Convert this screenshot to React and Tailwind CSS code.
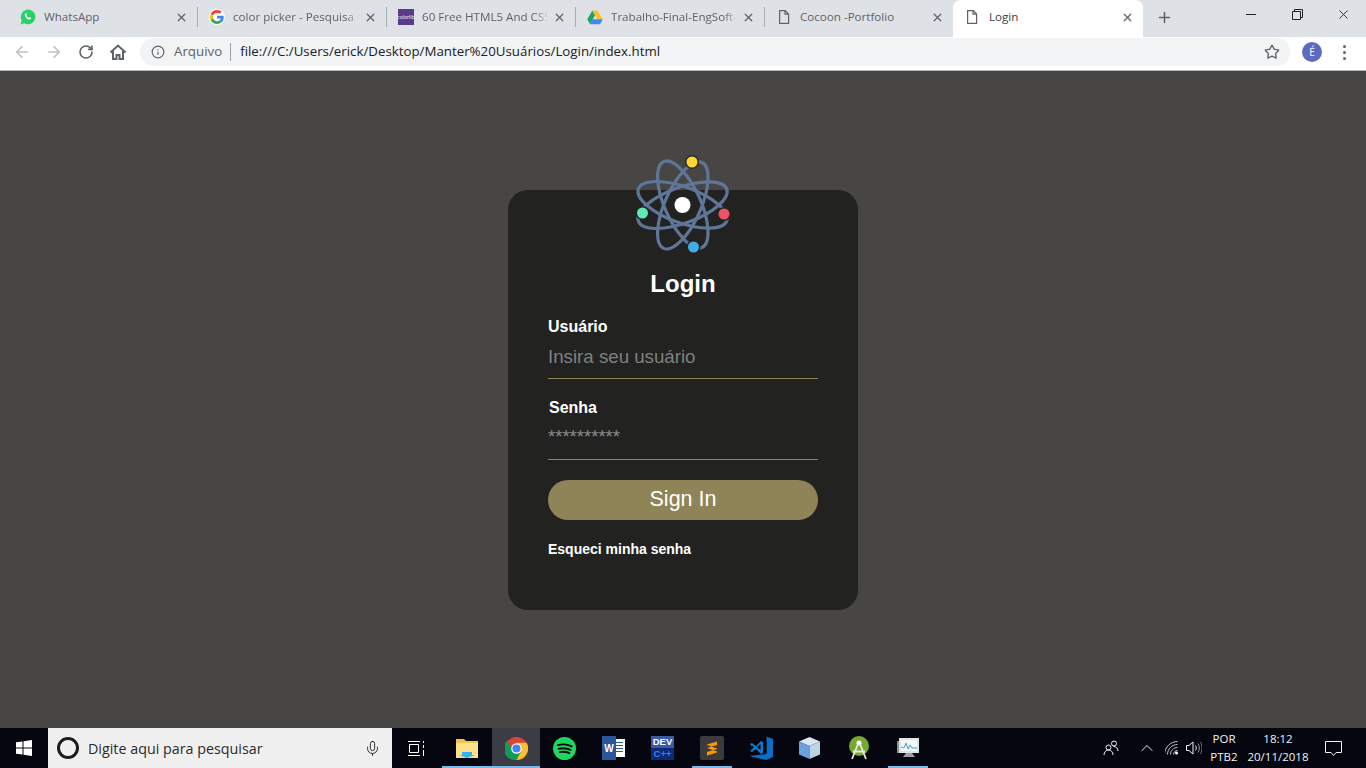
import React from 'react';
import { ArrowLeft, ArrowRight, RotateCw, Info, Star, X, Plus, Mic, ChevronUp } from 'lucide-react';

const FileIcon = () => (
  <svg width="14" height="16" viewBox="0 0 14 16" fill="none" stroke="#5f6368" strokeWidth="1.2">
    <path d="M2.6 1.6h5.6l3.4 3.4v9.4h-9zM8 1.6v3.6h3.6" />
  </svg>
);

const WhatsappIcon = () => (
  <svg width="16" height="16" viewBox="0 0 16 16">
    <path d="M0.6 15.4l1.1-4A7.3 7.3 0 1 1 4.6 14.3z" fill="#25d366" />
    <path d="M5.5 4.4c.4-.4.9-.3 1.1.2l.4 1c.1.3-.3.7-.5 1 .5 1 1.2 1.7 2.3 2.3.3-.2.7-.8 1-.6l1.1.6c.4.2.3.8-.1 1.2-.7.7-1.900.6-3.200-.2-1.400-.9-2.400-2.100-2.800-3.400-.2-.8.200-1.600.7-2.100z" fill="#fff" />
  </svg>
);

const GoogleIcon = () => (
  <span className="flex h-4 w-4 items-center justify-center rounded-full bg-white">
    <svg width="14" height="14" viewBox="0 0 48 48">
      <path fill="#ea4335" d="M24 9.500c3.500 0 6.700 1.200 9.200 3.600l6.900-6.900C35.900 2.400 30.500 0 24 0 14.600 0 6.500 5.400 2.600 13.200l8 6.200C12.400 13.700 17.700 9.500 24 9.500z" />
      <path fill="#4285f4" d="M47 24.500c0-1.600-.1-3.100-.4-4.500H24v9h12.900c-.6 3-2.200 5.500-4.700 7.200l7.700 6C44.400 38 47 31.800 47 24.500z" />
      <path fill="#fbbc05" d="M10.500 28.600A14.500 14.500 0 0 1 10.500 19.400l-8-6.200a24 24 0 0 0 0 21.600z" />
      <path fill="#34a853" d="M24 48c6.500 0 11.900-2.100 15.900-5.800l-7.700-6c-2.200 1.500-4.900 2.300-8.200 2.300-6.300 0-11.600-4.200-13.500-9.900l-8 6.200C6.500 42.600 14.600 48 24 48z" />
    </svg>
  </span>
);

const ColorlibIcon = () => (
  <span className="flex h-4 w-4 items-center justify-center overflow-hidden bg-[#5b3a8c] text-[5px] leading-none text-white">colorlib</span>
);

const DriveIcon = () => (
  <svg width="16" height="15" viewBox="0 0 16 15">
    <path d="M5.300 0.500h5.400l5 8.800h-5.400z" fill="#fbc02d" />
    <path d="M5.300 0.500L0.300 9.300l2.700 4.900 5-8.800z" fill="#1fa463" />
    <path d="M3 14.200h10l2.700-4.900H5.700z" fill="#4285f4" />
  </svg>
);

const HomeIcon = () => (
  <svg width="18" height="18" viewBox="0 0 18 18" fill="none" stroke="#5f6368" strokeWidth="2" className="ml-[15px]">
    <path d="M1.500 9.500L9 2.500l7.500 7M4 8v8h3.500v-4h3v4H14V8" />
  </svg>
);

const tabs = [
  { title: 'WhatsApp', icon: <WhatsappIcon /> },
  { title: 'color picker - Pesquisa G', icon: <GoogleIcon />, fade: true },
  { title: '60 Free HTML5 And CSS', icon: <ColorlibIcon />, fade: true },
  { title: 'Trabalho-Final-EngSoft-', icon: <DriveIcon />, fade: true },
  { title: 'Cocoon -Portfolio', icon: <FileIcon /> },
];

const Tab = ({ title, icon, fade, last }) => (
  <div className="relative flex h-[37px] w-[189px] shrink-0 items-center pb-[3px] pl-[12px] pr-[7px]">
    <span className="flex w-4 shrink-0 justify-center">{icon}</span>
    <span className={`ml-2 w-[126px] overflow-hidden whitespace-nowrap text-[11.600px] text-[#5f6368] ${fade ? '[mask-image:linear-gradient(to_right,black_90%,transparent)]' : ''}`}>
      {title}
    </span>
    <X size={13} strokeWidth={2.400} className="ml-auto mr-[2px] text-[#5f6368]" />
    {!last && <span className="absolute right-[-1px] top-[7px] h-[20px] w-px bg-[#a9acb0]" />}
  </div>
);

const TabStrip = () => (
  <div className="flex h-[37px] items-stretch bg-[#dee1e6] pl-[8px]">
    {tabs.map((t, i) => (
      <Tab key={t.title} {...t} last={i === tabs.length - 1} />
    ))}
    <div className="flex h-[37px] w-[190px] shrink-0 items-center rounded-t-[8px] bg-white pb-[3px] pl-[12px] pr-[9px]">
      <FileIcon />
      <span className="ml-[10px] text-[11.600px] text-[#3c4043]">Login</span>
      <X size={13} strokeWidth={2.400} className="ml-auto text-[#5f6368]" />
    </div>
    <div className="ml-[13px] flex items-center pb-[3px]">
      <Plus size={17} strokeWidth={2.200} className="text-[#5f6368]" />
    </div>
    <div className="ml-auto flex h-[29px] items-center text-[#202124]">
      <span className="flex w-[46px] justify-center"><span className="h-px w-[10px] bg-[#202124]" /></span>
      <span className="flex w-[46px] justify-center">
        <svg width="11" height="11" viewBox="0 0 11 11" fill="none" stroke="#202124">
          <path d="M0.500 2.500h8v8h-8zM2.500 2.500v-2h8v8h-2" />
        </svg>
      </span>
      <span className="flex w-[46px] justify-center"><X size={15} strokeWidth={1.400} /></span>
    </div>
  </div>
);

const Toolbar = () => (
  <div className="flex h-[34px] items-start border-b border-[#b8b8b8] bg-white pl-[13px] pr-[12px]">
    <div className="flex h-[30px] items-center">
      <ArrowLeft size={18} strokeWidth={2.200} className="text-[#bdc1c6]" />
      <ArrowRight size={18} strokeWidth={2.200} className="ml-[14px] text-[#bdc1c6]" />
      <RotateCw size={16} strokeWidth={2.400} className="ml-[15px] text-[#5f6368]" />
      <HomeIcon />
    </div>
    <div className="ml-[13px] mt-px flex h-[28px] w-[1150px] items-center rounded-full bg-[#f1f3f4] pl-[11px] pr-[10px]">
      <Info size={14} strokeWidth={2} className="text-[#5f6368]" />
      <span className="ml-[9px] text-[13.300px] text-[#5f6368]">Arquivo</span>
      <span className="ml-2 h-[18px] w-px bg-[#9aa0a6]" />
      <span className="ml-[9px] text-[13.300px] text-[#202124]">file:///C:/Users/erick/Desktop/Manter%20Usuários/Login/index.html</span>
      <Star size={16} strokeWidth={2} className="ml-auto text-[#5f6368]" />
    </div>
    <div className="flex h-[30px] items-center">
      <span className="ml-[12px] flex h-5 w-5 items-center justify-center rounded-full bg-[#5c6bc0] text-[10px] text-white">É</span>
      <span className="ml-[21px] flex flex-col gap-[3px]">
        <span className="h-[3px] w-[3px] rounded-full bg-[#5f6368]" />
        <span className="h-[3px] w-[3px] rounded-full bg-[#5f6368]" />
        <span className="h-[3px] w-[3px] rounded-full bg-[#5f6368]" />
      </span>
    </div>
  </div>
);

const AtomLogo = () => (
  <svg width="100" height="100" viewBox="-50 -50 100 100" fill="none" className="mx-auto">
    {[20, -20, 66, -66].map((a) => (
      <ellipse key={a} cx="-0.500" cy="0" rx="47" ry="18" stroke="#5f7698" strokeWidth="3.200" transform={`rotate(${a})`} />
    ))}
    <circle cx="-0.500" r="12" fill="#222221" />
    <circle cx="-0.500" r="8" fill="#fff" />
    <circle cx="9" cy="-43" r="7" fill="#2c2c2c" />
    <circle cx="9" cy="-43" r="5.500" fill="#fdd835" />
    <circle cx="41" cy="9" r="7" fill="#222221" />
    <circle cx="41" cy="9" r="5.500" fill="#ef5368" />
    <circle cx="10.500" cy="42" r="7" fill="#222221" />
    <circle cx="10.500" cy="42" r="5.500" fill="#41ade6" />
    <circle cx="-40.500" cy="8" r="7" fill="#222221" />
    <circle cx="-40.500" cy="8" r="5.500" fill="#62e8b4" />
  </svg>
);

const LoginCard = () => (
  <div className="flex h-[420px] w-[350px] flex-col rounded-[20px] bg-[#222221] px-[40px] font-['Liberation_Sans',sans-serif] text-white">
    <div className="-mt-[35px]"><AtomLogo /></div>
    <h1 className="mt-[15px] text-center text-[24px] font-bold leading-[28px]">Login</h1>
    <label className="mt-[20px] text-[16px] font-bold leading-[18px]">Usuário</label>
    <div className="flex h-[43px] items-center border-b border-[#8f8358] text-[18.700px] text-[#808080]">Insira seu usuário</div>
    <label className="ml-px mt-[20px] text-[16px] font-bold leading-[18px]">Senha</label>
    <div className="h-[43px] border-b border-[#8f8358] pt-[9px] text-[18.500px] leading-[22px] text-[#8a8a8a]">**********</div>
    <button className="mt-[20px] h-[40px] rounded-full bg-[#8f8358] pb-[2px] text-[21.500px] text-white">Sign In</button>
    <a className="mt-[21px] text-[14px] font-bold leading-[16px]">Esqueci minha senha</a>
  </div>
);

// Taskbar app icons, drawn small
const FolderApp = () => (
  <svg width="22" height="20" viewBox="0 0 22 20">
    <path d="M0 1h8l2 2h12v3H0z" fill="#f0c64a" />
    <path d="M0 5h22v15H0z" fill="#fde08a" />
    <path d="M6 14h10v3h3l-8 3-8-3h3z" fill="#36b3ea" />
  </svg>
);

const ChromeApp = () => (
  <svg width="23" height="23" viewBox="0 0 48 48">
    <circle cx="24" cy="24" r="24" fill="#db4437" />
    <path d="M24 48L36 27H24l-8 0-12-19a24 24 0 0 0 20 40z" fill="#0f9d58" />
    <path d="M24 48a24 24 0 0 0 21-36H24l10 17z" fill="#fbc02d" />
    <circle cx="24" cy="24" r="11" fill="#fff" />
    <circle cx="24" cy="24" r="8.500" fill="#4285f4" />
  </svg>
);

const SpotifyApp = () => (
  <svg width="23" height="23" viewBox="0 0 24 24">
    <circle cx="12" cy="12" r="12" fill="#1ed760" />
    <path d="M5 8.500c5-1.300 10-1 14.500 1.300M6 12.300c4.500-1.100 8.500-.7 12.300 1.200M7 15.800c3.500-.8 7-.5 10 1" stroke="#0a0a12" strokeWidth="2" fill="none" strokeLinecap="round" />
  </svg>
);

const WordApp = () => (
  <span className="relative flex h-[24px] w-[23px] items-center">
    <span className="absolute right-0 top-[3px] h-[18px] w-[12px] bg-white" />
    <span className="absolute right-[2px] top-[6px] h-[12px] w-[7px] bg-[repeating-linear-gradient(#2b579a_0_1px,transparent_1px_3px)]" />
    <span className="relative flex h-[24px] w-[14px] items-center justify-center bg-[#2b579a] font-['Liberation_Sans',sans-serif] text-[10px] font-bold text-white">W</span>
  </span>
);

const DevApp = () => (
  <span className="flex h-[24px] w-[23px] flex-col items-center justify-center bg-[#3a5aa8] font-['Liberation_Sans',sans-serif] text-[9.500px] font-bold leading-[12px]">
    <span className="text-white">DEV</span>
    <span className="w-full bg-[#0d2a78] text-center text-[#3f7fe0]">C++</span>
  </span>
);

const SublimeApp = () => (
  <span className="flex h-[24px] w-[24px] items-center justify-center rounded-[2px] bg-[#3b3b3b]">
    <svg width="12" height="15" viewBox="0 0 12 15">
      <path d="M11 0.500v3.500L1 7V3.500zM1 7l10 3.500v-3L1 4zM11 8v3.500L1 14.500V11z" fill="#ff9800" />
    </svg>
  </span>
);

const VscodeApp = () => (
  <svg width="24" height="24" viewBox="0 0 24 24">
    <path d="M17.500 0.500L24 3v18l-6.500 3L0 20l17.500-2V0.500z" fill="#0b6fc4" />
    <path d="M17.500 5v12l-7.500-6z" fill="#05060f" />
    <path d="M1 8l2-1 4 3 5-5 2 1v11l-2 1-5-5-4 3-2-1 3-3z" fill="#0b7ad1" />
    <path d="M11.500 8v6l-3.500-3zM2.800 9.300l2.200 1.700-2.200 1.800z" fill="#05060f" />
  </svg>
);

const CubeApp = () => (
  <svg width="23" height="24" viewBox="0 0 23 24">
    <path d="M11.500 1L22 5.500 11.500 10 1 5.500z" fill="#dce6f2" />
    <path d="M1 5.500L11.500 10v13L1 18.500z" fill="#6f9fe0" />
    <path d="M22 5.500L11.500 10v13L22 18.500z" fill="#bcd4e4" />
  </svg>
);

const AndroidApp = () => (
  <svg width="22" height="24" viewBox="0 0 22 24">
    <circle cx="11" cy="10" r="10" fill="#78a92f" />
    <circle cx="11" cy="7" r="2.500" fill="#fff" />
    <path d="M10 8L4 23M12 8l6 15M5 15.500h12" stroke="#e8e8e8" strokeWidth="1.800" fill="none" />
  </svg>
);

const MonitorApp = () => (
  <svg width="24" height="24" viewBox="0 0 24 24">
    <path d="M1 5h2v12H1z" fill="#8c9196" />
    <path d="M3 2h20v15H3z" fill="#dfe3e6" />
    <path d="M5 4h16v11H5z" fill="#f4f7f8" />
    <path d="M5 11l3 1 2-5 2 6 2-4 2 3h5" stroke="#3b9fd8" strokeWidth="1" fill="none" />
    <path d="M10 17h6l3 4H7z" fill="#9aa0a4" />
  </svg>
);

const PeopleTray = () => (
  <svg width="16" height="16" viewBox="0 0 16 16" fill="none" stroke="#f2f2f2" strokeWidth="1">
    <circle cx="5.500" cy="7.500" r="2.500" />
    <path d="M1 15c0-3 2-5 4.500-5s4.500 2 4.500 5" />
    <circle cx="11" cy="3.500" r="2.500" />
    <path d="M10.500 6.500c2.500 0 4.500 1.500 4.500 4.500" />
  </svg>
);

const WifiTray = () => (
  <svg width="14" height="14" viewBox="0 0 14 14" fill="none" stroke="#c8c8c8" strokeWidth="1">
    <path d="M0.500 13.500C0.500 6.500 6.500 0.500 13.500 0.500M3.500 13.500c0-5.500 4.500-10 10-10M6.500 13.500c0-3.900 3.100-7 7-7M9.500 13.500c0-2.200 1.800-4 4-4" transform="translate(-1 0)" />
    <circle cx="11.500" cy="12" r="1.500" fill="#fff" stroke="none" />
  </svg>
);

const VolumeTray = () => (
  <svg width="16" height="16" viewBox="0 0 16 16" fill="none" stroke="#f2f2f2" strokeWidth="1">
    <path d="M0.500 5.500h2.500l4-3.500v12l-4-3.500H0.500z" />
    <path d="M9.500 5.500c1 1.500 1 3.500 0 5" />
    <path d="M12 3.500c1.800 2.600 1.800 6.400 0 9" stroke="#999" />
    <path d="M14.500 2c2 3.500 2 8.500 0 12" stroke="#777" />
  </svg>
);

const NotifyTray = () => (
  <svg width="17" height="15" viewBox="0 0 17 15" fill="none" stroke="#f2f2f2" strokeWidth="1">
    <path d="M0.500 0.500h16v11h-5.500l-2.500 3-2.500-3H0.500z" />
  </svg>
);

const apps = [
  { icon: <FolderApp />, w: 50, line: 'w-full' },
  { icon: <ChromeApp />, w: 48, active: true, line: 'w-full' },
  { icon: <SpotifyApp />, w: 49 },
  { icon: <WordApp />, w: 49 },
  { icon: <DevApp />, w: 49 },
  { icon: <SublimeApp />, w: 49, line: 'w-[40px]' },
  { icon: <VscodeApp />, w: 49 },
  { icon: <CubeApp />, w: 49 },
  { icon: <AndroidApp />, w: 49 },
  { icon: <MonitorApp />, w: 49, line: 'w-[40px]' },
];

const Taskbar = () => (
  <div className="flex h-[40px] items-stretch bg-[#05060f] font-['Open_Sans',sans-serif] text-white">
    <div className="flex w-[48px] items-center justify-center">
      <svg width="16" height="16" viewBox="0 0 16 16" fill="#fff">
        <path d="M0 2.300L6.500 1.400V7.500H0zM7.500 1.200L16 0v7.500H7.500zM0 8.500h6.500v6.100L0 13.700zM7.500 8.500H16V16l-8.500-1.200z" />
      </svg>
    </div>
    <div className="flex w-[344px] items-center bg-[#f0f0f0] pl-[9px] pr-[11px] text-[#2b2b2b]">
      <span className="h-[22px] w-[22px] rounded-full border-[3px] border-[#1c1c1c]" />
      <span className="ml-[9px] pt-px text-[14.300px]">Digite aqui para pesquisar</span>
      <Mic size={17} strokeWidth={1.300} className="ml-auto text-[#222]" />
    </div>
    <div className="flex w-[50px] items-center justify-center pr-[2px]">
      <svg width="17" height="15" viewBox="0 0 17 15" fill="none" stroke="#fff">
        <path d="M0 .5h12M0 14.500h12M1.500 3.500h9v8h-9zM15.500 0v2M15.500 4v3M15.500 9v6" />
      </svg>
    </div>
    {apps.map((app, i) => (
      <div key={i} className={`relative flex shrink-0 items-center justify-center ${app.active ? 'bg-[#3c3d44]' : ''}`} style={{ width: app.w }}>
        {app.icon}
        {app.line && <span className={`absolute bottom-0 left-1/2 h-[2px] -translate-x-1/2 bg-[#76b9ed] ${app.line}`} />}
      </div>
    ))}
    <div className="ml-auto flex items-center text-[#f2f2f2]">
      <PeopleTray />
      <ChevronUp size={20} strokeWidth={1.200} className="ml-[18px]" />
      <span className="ml-[8px]"><WifiTray /></span>
      <span className="ml-[7px]"><VolumeTray /></span>
      <div className="ml-[4px] flex w-[36px] flex-col items-center text-[11.500px] leading-[18px]">
        <span>POR</span>
        <span>PTB2</span>
      </div>
      <div className="ml-[3px] flex w-[66px] flex-col items-center text-[11.500px] leading-[18px]">
        <span>18:12</span>
        <span>20/11/2018</span>
      </div>
      <span className="ml-[14px] mr-[24px]"><NotifyTray /></span>
    </div>
  </div>
);

const App = () => (
  <div className="flex h-[768px] flex-col overflow-hidden font-['Open_Sans',sans-serif]">
    <TabStrip />
    <Toolbar />
    <main className="flex flex-1 justify-center bg-[#474644] pt-[119px]">
      <LoginCard />
    </main>
    <Taskbar />
  </div>
);

export default App;
